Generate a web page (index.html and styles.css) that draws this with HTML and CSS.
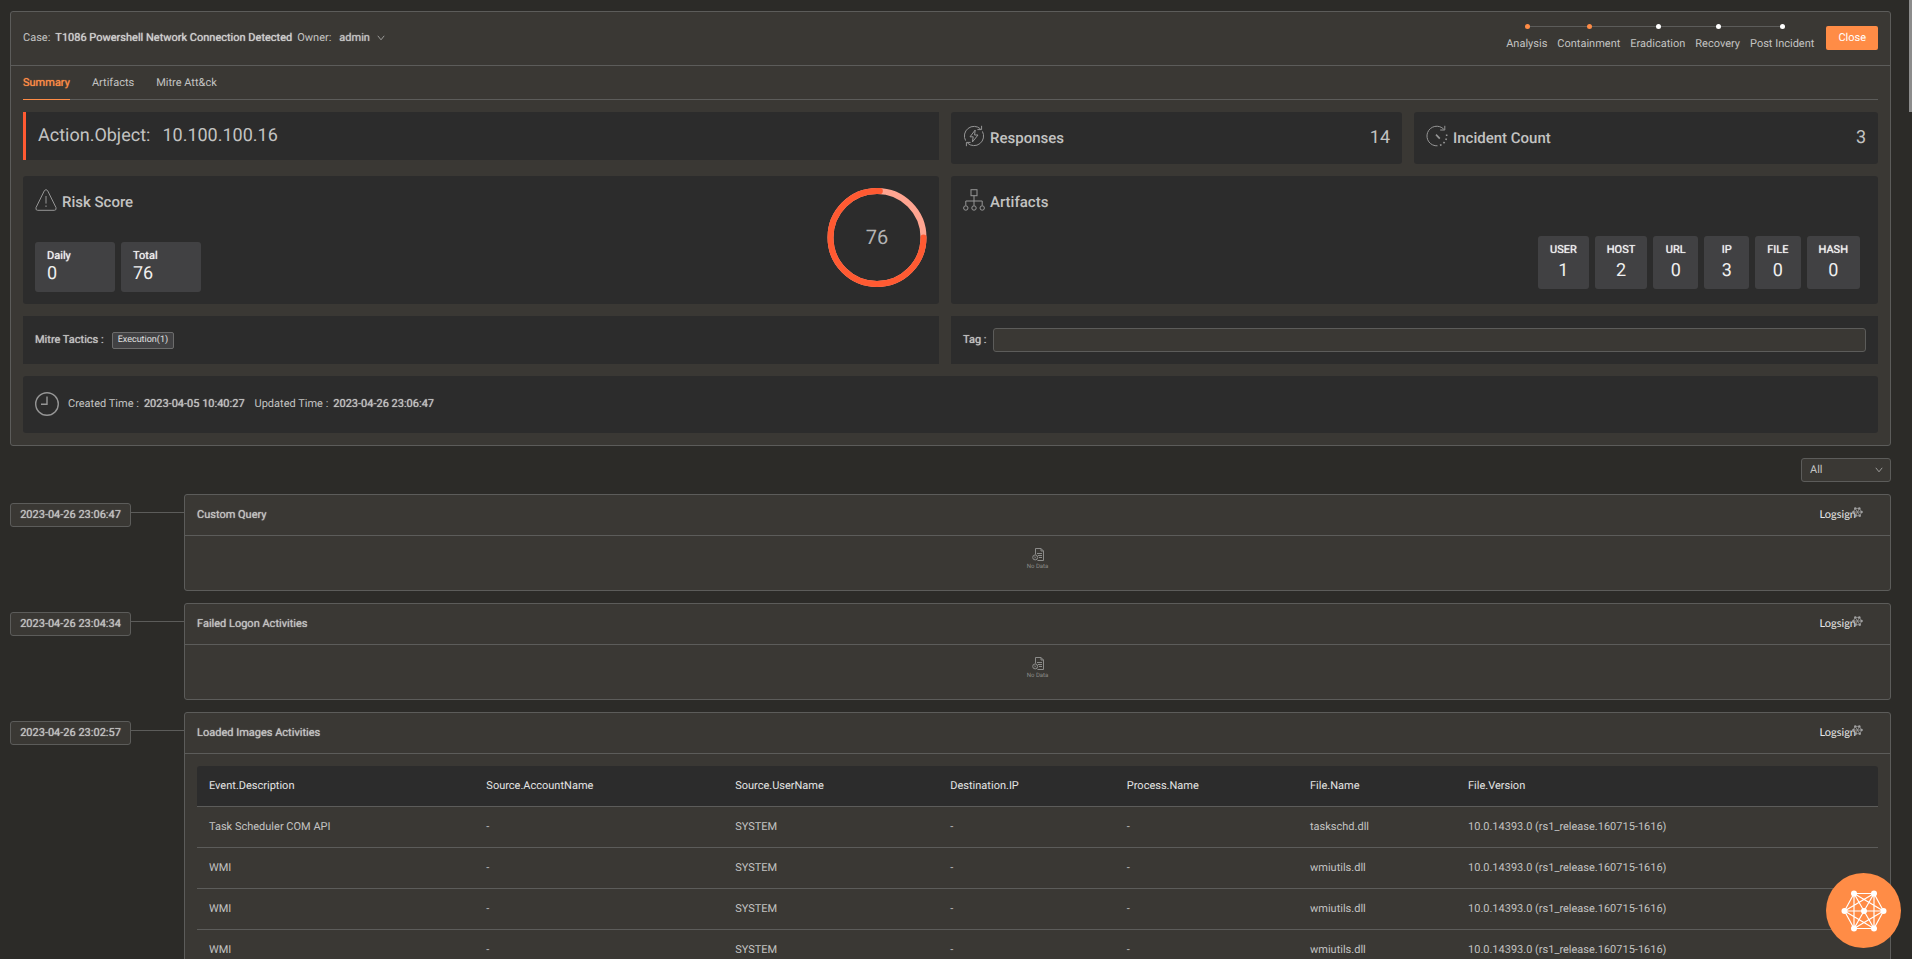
FILE: index.html
```html
<!DOCTYPE html>
<html lang="en">
<head>
    <meta charset="UTF-8">
    <meta name="viewport" content="width=device-width, initial-scale=1.0">
    <title>Case: T1086 Powershell Network Connection Detected</title>
    <link rel="stylesheet" href="styles.css">
</head>
<body>
    <!-- shared icons -->
    <svg class="sprite" aria-hidden="true">
        <symbol id="chevron" viewBox="0 0 8 6">
            <path d="M0.8 0.8 L4 4.8 L7.2 0.8" fill="none" stroke="currentColor"/>
        </symbol>
        <symbol id="no-data" viewBox="0 0 12 13">
            <path d="M3.5 6.5 V0.5 H9 L11.5 3 V12.5 H5.5" fill="none" stroke="currentColor"/>
            <path d="M9 0.5 V3 H11.5" fill="none" stroke="currentColor"/>
            <path d="M5 5.5 H10 M6 7.5 H10 M7 9.5 H10" fill="none" stroke="currentColor"/>
            <circle cx="3.2" cy="9.4" r="2.5" fill="none" stroke="currentColor"/>
            <path d="M2.2 8.4 L4.2 10.4 M4.2 8.4 L2.2 10.4" stroke="currentColor" stroke-width="0.6"/>
        </symbol>
        <symbol id="logo-mesh" viewBox="0 0 12 12">
            <path d="M3.5 1.5 H8 L10.5 5.5 L8.5 9.5 H4 L1.5 5.5 Z M3.5 1.5 L8.5 9.5 M8 1.5 L4 9.5 M1.5 5.5 H10.5" fill="none" stroke="currentColor" stroke-width="0.8"/>
            <g fill="currentColor">
                <circle cx="3.5" cy="1.5" r="1.3"/>
                <circle cx="8" cy="1.5" r="1.3"/>
                <circle cx="10.5" cy="5.5" r="1.3"/>
                <circle cx="8.5" cy="9.5" r="1.3"/>
                <circle cx="4" cy="9.5" r="1.3"/>
                <circle cx="1.5" cy="5.5" r="1.3"/>
            </g>
        </symbol>
    </svg>

    <main class="page">
        <section class="case">
            <header class="case-header">
                <div class="case-title">
                    <span>Case:</span>
                    <strong>T1086 Powershell Network Connection Detected</strong>
                    <span>Owner:</span>
                    <button class="owner" type="button">admin <svg class="chevron"><use href="#chevron"/></svg></button>
                </div>
                <ol class="steps">
                    <li class="step done">Analysis</li>
                    <li class="step done">Containment</li>
                    <li class="step">Eradication</li>
                    <li class="step">Recovery</li>
                    <li class="step">Post Incident</li>
                </ol>
                <button class="close" type="button">Close</button>
            </header>

            <div class="case-body">
                <nav class="tabs">
                    <a class="tab active" href="#summary">Summary</a>
                    <a class="tab" href="#artifacts">Artifacts</a>
                    <a class="tab" href="#mitre">Mitre Att&amp;ck</a>
                </nav>

                <div class="grid" id="summary">
                    <div class="box object">
                        <span>Action.Object:</span>
                        <span>10.100.100.16</span>
                    </div>
                    <div class="counters">
                        <div class="box counter">
                            <svg class="icon" viewBox="0 0 22 22">
                                <path d="M2.6 15.6 A9.6 9.6 0 0 1 17.5 3.9 M19.4 6.4 A9.6 9.6 0 0 1 4.5 18.1"/>
                                <path d="M18.6 0.8 V4.6 H14.4 M3.4 21.2 V17.4 H7.6"/>
                                <path d="M12.2 5 L7 11.8 H10.2 L9.4 17 L15 10 H11.6 Z"/>
                            </svg>
                            <h2>Responses</h2>
                            <span class="count">14</span>
                        </div>
                        <div class="box counter">
                            <svg class="icon" viewBox="0 0 22 22">
                                <path d="M11.5 20.8 A9.8 9.8 0 1 1 17.8 4.2"/>
                                <path d="M18.8 0.8 V5 H14.2"/>
                                <path d="M20.6 9.5 A9.8 9.8 0 0 1 12 20.7" stroke-width="1.6" stroke-dasharray="1.6 2.4"/>
                                <path d="M10 9.6 L13.8 13.6" stroke-width="1.6"/>
                            </svg>
                            <h2>Incident Count</h2>
                            <span class="count">3</span>
                        </div>
                    </div>

                    <div class="box risk">
                        <div class="risk-info">
                            <div class="box-title">
                                <svg class="icon" viewBox="0 0 22 22">
                                    <path d="M9.4 1.6 Q11 -0.4 12.6 1.6 L21 18.6 Q21.6 21.3 19.4 21.3 H2.6 Q0.4 21.3 1 18.6 Z"/>
                                    <path d="M11 7 V14.6 M11 16.4 V18"/>
                                </svg>
                                <h2>Risk Score</h2>
                            </div>
                            <div class="tiles">
                                <div class="tile wide"><b>Daily</b><span>0</span></div>
                                <div class="tile wide"><b>Total</b><span>76</span></div>
                            </div>
                        </div>
                        <svg class="gauge" viewBox="0 0 100 100">
                            <circle class="gauge-track" cx="50" cy="49.5" r="46.5"/>
                            <circle class="gauge-value" cx="50" cy="49.5" r="46.5" pathLength="100" stroke-dasharray="76 24"/>
                            <text x="50" y="56">76</text>
                        </svg>
                    </div>
                    <div class="box artifacts">
                        <div class="box-title">
                            <svg class="icon" viewBox="0 0 22 22">
                                <rect x="8" y="0.7" width="6" height="6"/>
                                <path d="M11 6.7 V16.5 M2.8 16.5 V12 H19.2 V16.5"/>
                                <circle cx="2.8" cy="19" r="2.2"/>
                                <circle cx="11" cy="19" r="2.2"/>
                                <circle cx="19.2" cy="19" r="2.2"/>
                            </svg>
                            <h2>Artifacts</h2>
                        </div>
                        <div class="tiles right">
                            <div class="tile"><b>USER</b><span>1</span></div>
                            <div class="tile"><b>HOST</b><span>2</span></div>
                            <div class="tile"><b>URL</b><span>0</span></div>
                            <div class="tile"><b>IP</b><span>3</span></div>
                            <div class="tile"><b>FILE</b><span>0</span></div>
                            <div class="tile"><b>HASH</b><span>0</span></div>
                        </div>
                    </div>

                    <div class="box line">
                        <strong>Mitre Tactics :</strong>
                        <span class="badge">Execution(1)</span>
                    </div>
                    <div class="box line tag">
                        <label for="tag">Tag :</label>
                        <input type="text" id="tag">
                    </div>

                    <div class="box times">
                        <svg class="clock" viewBox="0 0 24 24">
                            <circle cx="12" cy="12" r="11.3"/>
                            <path d="M12 4.5 V12.3 H6"/>
                        </svg>
                        <span>Created Time :</span>
                        <strong>2023-04-05 10:40:27</strong>
                        <span class="updated">Updated Time :</span>
                        <strong>2023-04-26 23:06:47</strong>
                    </div>
                </div>
            </div>
        </section>

        <div class="filter">
            <select aria-label="Filter">
                <option>All</option>
            </select>
            <svg class="chevron"><use href="#chevron"/></svg>
        </div>

        <section class="timeline">
            <article class="event">
                <time class="stamp">2023-04-26 23:06:47</time>
                <div class="panel">
                    <header class="panel-header">
                        <h3>Custom Query</h3>
                        <span class="logo">Logsign<svg><use href="#logo-mesh"/></svg></span>
                    </header>
                    <div class="empty">
                        <svg><use href="#no-data"/></svg>
                        <span>No Data</span>
                    </div>
                </div>
            </article>

            <article class="event">
                <time class="stamp">2023-04-26 23:04:34</time>
                <div class="panel">
                    <header class="panel-header">
                        <h3>Failed Logon Activities</h3>
                        <span class="logo">Logsign<svg><use href="#logo-mesh"/></svg></span>
                    </header>
                    <div class="empty">
                        <svg><use href="#no-data"/></svg>
                        <span>No Data</span>
                    </div>
                </div>
            </article>

            <article class="event">
                <time class="stamp">2023-04-26 23:02:57</time>
                <div class="panel">
                    <header class="panel-header">
                        <h3>Loaded Images Activities</h3>
                        <span class="logo">Logsign<svg><use href="#logo-mesh"/></svg></span>
                    </header>
                    <div class="table-wrap">
                        <table>
                            <thead>
                                <tr>
                                    <th class="c-desc">Event.Description</th>
                                    <th class="c-account">Source.AccountName</th>
                                    <th class="c-user">Source.UserName</th>
                                    <th class="c-ip">Destination.IP</th>
                                    <th class="c-process">Process.Name</th>
                                    <th class="c-file">File.Name</th>
                                    <th>File.Version</th>
                                </tr>
                            </thead>
                            <tbody>
                                <tr>
                                    <td>Task Scheduler COM API</td>
                                    <td>-</td>
                                    <td>SYSTEM</td>
                                    <td>-</td>
                                    <td>-</td>
                                    <td>taskschd.dll</td>
                                    <td>10.0.14393.0 (rs1_release.160715-1616)</td>
                                </tr>
                                <tr>
                                    <td>WMI</td>
                                    <td>-</td>
                                    <td>SYSTEM</td>
                                    <td>-</td>
                                    <td>-</td>
                                    <td>wmiutils.dll</td>
                                    <td>10.0.14393.0 (rs1_release.160715-1616)</td>
                                </tr>
                                <tr>
                                    <td>WMI</td>
                                    <td>-</td>
                                    <td>SYSTEM</td>
                                    <td>-</td>
                                    <td>-</td>
                                    <td>wmiutils.dll</td>
                                    <td>10.0.14393.0 (rs1_release.160715-1616)</td>
                                </tr>
                                <tr>
                                    <td>WMI</td>
                                    <td>-</td>
                                    <td>SYSTEM</td>
                                    <td>-</td>
                                    <td>-</td>
                                    <td>wmiutils.dll</td>
                                    <td>10.0.14393.0 (rs1_release.160715-1616)</td>
                                </tr>
                            </tbody>
                        </table>
                    </div>
                </div>
            </article>
        </section>
    </main>

    <div class="scroll-thumb"></div>

    <button class="fab" type="button" aria-label="Menu">
        <svg viewBox="0 0 46 46">
            <path d="M13 5.5 H33 L42.5 23 L33 40.5 H13 L3.5 23 Z M13 5.5 V40.5 M33 5.5 V40.5 M3.5 23 H42.5 M13 5.5 L33 40.5 M33 5.5 L13 40.5 M3.5 23 L33 5.5 M3.5 23 L33 40.5 M42.5 23 L13 5.5 M42.5 23 L13 40.5" fill="none" stroke="#fff" stroke-width="1.2"/>
            <g fill="#fff">
                <circle cx="13" cy="5.5" r="3"/>
                <circle cx="33" cy="5.5" r="3"/>
                <circle cx="3.5" cy="23" r="3"/>
                <circle cx="23" cy="23" r="3"/>
                <circle cx="42.5" cy="23" r="3"/>
                <circle cx="13" cy="40.5" r="3"/>
                <circle cx="33" cy="40.5" r="3"/>
            </g>
        </svg>
    </button>
</body>
</html>
```

FILE: styles.css
```css
* {
    box-sizing: border-box;
}
body {
    margin: 0;
    height: 100vh;
    overflow: hidden;
    background-color: #2c2b28;
    color: #c3c3c2;
    font-family: Roboto, sans-serif;
    font-size: 11px;
    line-height: 16px;
    text-rendering: geometricPrecision;
}
h2, h3, ol {
    margin: 0;
    padding: 0;
}
/* small labels are thickened instead of using the wider bold face */
strong, b, h3, .owner, .stamp, .tab.active, .tag label {
    font-weight: 400;
    text-shadow: 0 0 1px currentColor;
}
button, input, select {
    font: inherit;
    color: inherit;
    text-rendering: inherit;
}
a {
    color: inherit;
    text-decoration: none;
}
.sprite {
    display: none;
}
.page {
    padding: 11px 21px 0 10px;
}

/* case card */
.case {
    background-color: #3a3834;
    border: 1px solid #5c5c5a;
    border-radius: 3px;
}
.case-header {
    display: flex;
    align-items: center;
    gap: 12px;
    height: 54px;
    padding: 0 12px 2px;
    border-bottom: 1px solid #5c5c5a;
}
.case-title {
    display: flex;
    gap: 5px;
    flex: 1;
}
.case-title strong {
    color: #d0d0cf;
}
.owner {
    display: flex;
    align-items: center;
    gap: 7px;
    padding: 0 3px;
    border: 0;
    background: none;
}
.chevron {
    width: 8px;
    height: 6px;
    color: #9a9a98;
}
.steps {
    display: flex;
    gap: 10px;
    list-style: none;
}
.step {
    position: relative;
    padding-top: 12px;
    text-align: center;
}
.step::before {
    content: "";
    position: absolute;
    z-index: 1;
    top: 0;
    left: 50%;
    width: 5px;
    height: 5px;
    margin-left: -2px;
    border-radius: 50%;
    background-color: #fff;
}
.step.done::before {
    background-color: #ff8c46;
}
/* the rail runs behind the dots, from the first to the last */
.step::after {
    content: "";
    position: absolute;
    top: 2px;
    left: -5px;
    right: -5px;
    height: 1px;
    background-color: #5c5c5a;
}
.step:first-child::after {
    left: 50%;
}
.step:last-child::after {
    right: 50%;
}
.close {
    height: 24px;
    padding: 0 12px;
    border: 0;
    border-radius: 2px;
    background-color: #ff8c46;
    color: #fff;
}
.case-body {
    padding: 0 12px 12px;
}
.tabs {
    display: flex;
    gap: 22px;
    border-bottom: 1px solid #5c5c5a;
}
.tab {
    padding: 9px 0 8px;
    margin-bottom: -1px;
    border-bottom: 1px solid transparent;
}
.tab.active {
    border-bottom-color: #ff8c46;
    color: #ff8c46;
}

/* summary grid */
.grid {
    display: grid;
    grid-template-columns: 916fr 927fr;
    gap: 12px;
    margin-top: 12px;
}
.box {
    background-color: #2c2c2c;
    border-radius: 3px;
}
.object {
    display: flex;
    align-items: center;
    align-self: start;
    gap: 12px;
    height: 48px;
    padding: 0 12px;
    border-left: 3px solid #ff5a32;
    border-radius: 0;
    font-size: 18px;
}
.counters {
    display: grid;
    grid-template-columns: 451fr 464fr;
    gap: 12px;
}
.counter {
    display: flex;
    align-items: center;
    height: 52px;
    padding: 0 12px;
}
h2 {
    margin-left: 5px;
    font-size: 15px;
    font-weight: 500;
    line-height: 20px;
}
.icon {
    width: 22px;
    height: 22px;
    margin-bottom: 4px;
    fill: none;
    stroke: #969696;
}
.count {
    margin-left: auto;
    font-size: 18px;
}
.risk, .artifacts {
    display: flex;
    height: 128px;
    padding: 12px;
}
.risk {
    justify-content: space-between;
}
.risk-info, .artifacts {
    display: flex;
    flex-direction: column;
    justify-content: space-between;
}
.artifacts {
    padding: 12px 18px 15px 12px;
}
.box-title {
    display: flex;
    align-items: center;
    padding-top: 1px;
}
.tiles {
    display: flex;
    gap: 6px;
}
.tiles.right {
    justify-content: flex-end;
}
.tile {
    display: flex;
    flex-direction: column;
    align-items: center;
    gap: 4px;
    min-width: 45px;
    padding: 6px 12px 9px;
    border-radius: 3px;
    background-color: #414143;
    color: #f0f0f0;
}
.tile span {
    font-size: 18px;
    line-height: 18px;
}
.tile.wide {
    align-items: flex-start;
    gap: 1px;
    width: 80px;
}
.gauge {
    width: 100px;
    height: 100px;
}
.gauge circle {
    fill: none;
    stroke-width: 6;
}
.gauge-track {
    stroke: #ffa591;
}
.gauge-value {
    stroke: #ff5a32;
    stroke-linecap: round;
}
.gauge text {
    fill: #b4b4b4;
    font-size: 20px;
    text-anchor: middle;
}
.line {
    display: flex;
    align-items: center;
    gap: 8px;
    height: 48px;
    padding: 0 12px;
    border-radius: 0;
}
.badge {
    padding: 0 5px;
    border: 1px solid #6c6c6c;
    border-radius: 2px;
    background-color: #414143;
    color: #e0e0e0;
    font-size: 9px;
    line-height: 15px;
}
.tag {
    gap: 6px;
}
.tag input {
    flex: 1;
    height: 24px;
    padding: 0 8px;
    border: 1px solid #5c5c5a;
    border-radius: 3px;
    background-color: #3a3834;
}
.times {
    display: flex;
    grid-column: 1 / -1;
    align-items: center;
    gap: 5px;
    height: 57px;
    padding: 0 12px 2px;
}
.clock {
    width: 24px;
    height: 24px;
    margin-right: 4px;
    fill: none;
    stroke: #969696;
    stroke-width: 1.4;
}
.updated {
    margin-left: 5px;
}

/* filter drop-down */
.filter {
    position: relative;
    width: 90px;
    margin: 12px 0 12px auto;
}
.filter select {
    display: block;
    width: 100%;
    height: 24px;
    padding: 0 8px;
    border: 1px solid #5c5c5a;
    border-radius: 3px;
    background-color: #3a3834;
    appearance: none;
}
.filter .chevron {
    position: absolute;
    top: 9px;
    right: 8px;
}

/* timeline */
.timeline {
    display: flex;
    flex-direction: column;
    gap: 12px;
}
.event {
    display: grid;
    grid-template-columns: 121px 1fr;
    gap: 53px;
    align-items: start;
}
.stamp {
    position: relative;
    margin-top: 9px;
    padding: 3px 0;
    border: 1px solid #5c5c5a;
    border-radius: 3px;
    background-color: #3a3834;
    text-align: center;
    white-space: nowrap;
}
.stamp::after {
    content: "";
    position: absolute;
    top: 8px;
    left: 100%;
    width: 54px;
    height: 1px;
    background-color: #5c5c5a;
}
.panel {
    border: 1px solid #5c5c5a;
    border-radius: 3px;
    background-color: #3a3834;
}
.panel-header {
    display: flex;
    align-items: center;
    justify-content: space-between;
    height: 41px;
    padding: 0 27px 0 12px;
    border-bottom: 1px solid #5c5c5a;
}
h3 {
    font-size: 11px;
}
.logo {
    display: flex;
    align-items: center;
    color: #e6e6e6;
    font-family: Lato, sans-serif;
    font-size: 11px;
}
.logo svg {
    width: 11px;
    height: 11px;
    margin: 0 0 6px -4px;
    color: #a0a0a0;
}
.empty {
    display: flex;
    flex-direction: column;
    align-items: center;
    height: 54px;
    padding-top: 12px;
    color: #8c8c8a;
    font-size: 6px;
    line-height: 12px;
}
.empty svg {
    width: 12px;
    height: 13px;
}
.table-wrap {
    padding: 12px;
}
table {
    width: 100%;
    border-collapse: separate;
    border-spacing: 0;
    table-layout: fixed;
}
th, td {
    height: 41px;
    padding: 0 12px;
    border-bottom: 1px solid #5c5c5a;
    text-align: left;
    font-weight: 400;
}
th {
    background-color: #2c2c2c;
    color: #e4e4e4;
}
th:first-child {
    border-top-left-radius: 3px;
}
th:last-child {
    border-top-right-radius: 3px;
}
.c-desc {
    width: 16.5%;
}
.c-account {
    width: 14.8%;
}
.c-user {
    width: 12.8%;
}
.c-ip {
    width: 10.5%;
}
.c-process {
    width: 10.9%;
}
.c-file {
    width: 9.4%;
}

/* page scrollbar and floating button */
.scroll-thumb {
    position: fixed;
    top: 0;
    right: 0;
    width: 3px;
    height: 112px;
    background-color: #8c8c8c;
}
.fab {
    position: fixed;
    right: 11px;
    bottom: 11px;
    display: flex;
    align-items: center;
    justify-content: center;
    width: 75px;
    height: 75px;
    padding: 0;
    border: 0;
    border-radius: 50%;
    background-color: #ff8c46;
}
.fab svg {
    width: 46px;
    height: 46px;
}
```
